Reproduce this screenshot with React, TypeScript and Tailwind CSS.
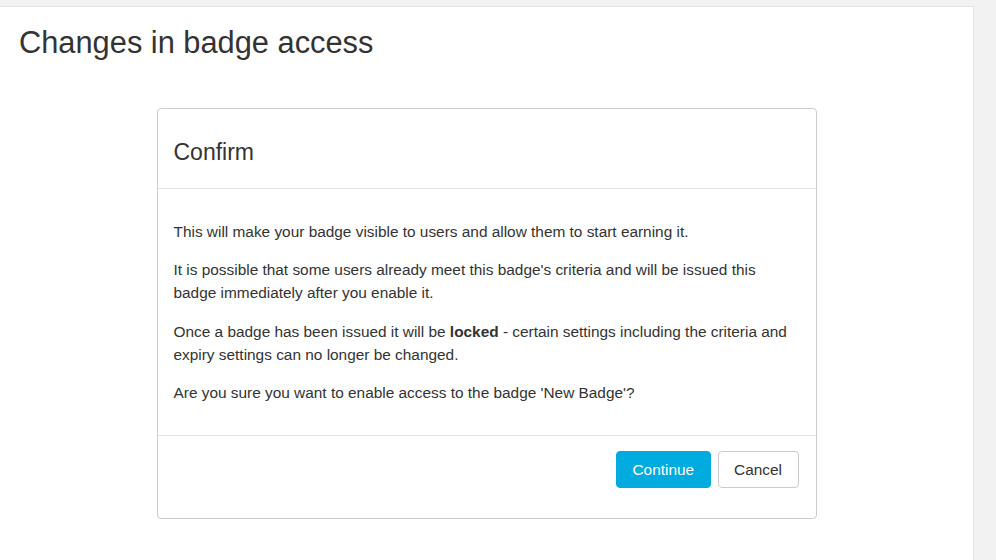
export default function App() {
  return (
    <div
      className="min-h-[560px] bg-[#f2f2f2] pt-[6px] pr-[22px] text-[#333]"
      style={{ fontFamily: '"Liberation Sans", Arial, sans-serif' }}
    >
      <div className="min-h-[554px] border-t border-r border-[#e3e3e3] bg-white px-[19px] pt-[18px] pb-10">
        <h2 className="text-[30.8px] leading-[36px] font-normal">Changes in badge access</h2>

        <div className="mx-auto mt-[47px] w-[660px] rounded-[4px] border border-[#ccc] bg-white">
          {/* Header */}
          <div className="border-b border-[#e5e5e5] px-4 pt-[28px] pb-[21px]">
            <h3 className="text-[23px] leading-[30px] font-normal">Confirm</h3>
          </div>

          {/* Body */}
          <div className="px-4 pt-[31px] pb-[16px] text-[15.4px] leading-[23px]">
            <p className="mb-[15px]">This will make your badge visible to users and allow them to start earning it.</p>
            <p className="mb-[16px]">
              It is possible that some users already meet this badge's criteria and will be issued this badge
              immediately after you enable it.
            </p>
            <p className="mb-[15px]">
              Once a badge has been issued it will be <b className="font-bold">locked</b> - certain settings
              including the criteria and expiry settings can no longer be changed.
            </p>
            <p className="mb-[15px]">Are you sure you want to enable access to the badge 'New Badge'?</p>
          </div>

          {/* Footer */}
          <div className="flex justify-end gap-[7px] border-t border-[#e5e5e5] px-[17px] pt-[15px] pb-[30px]">
            <button className="h-[37px] rounded-[4px] border border-[#00aadf] bg-[#00acdf] px-[15.5px] text-[15.4px] text-white">
              Continue
            </button>
            <button className="h-[37px] rounded-[4px] border border-[#ccc] bg-white px-[15.5px] text-[15.4px] text-[#333]">
              Cancel
            </button>
          </div>
        </div>
      </div>
    </div>
  );
}
